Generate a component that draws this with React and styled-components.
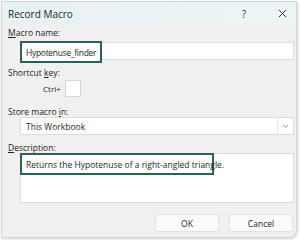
import styled, { createGlobalStyle } from "styled-components";

const Global = createGlobalStyle`
  html, body { margin: 0; padding: 0; background: #ffffff; }
  body { width: 300px; height: 240px; overflow: hidden; font-family: "Open Sans", "Noto Sans", sans-serif; }
`;

const Frame = styled.div`
  box-sizing: border-box;
  margin: 1px 0 0 1px;
  width: 296px;
  height: 237px;
  border: 1px solid #d4d6d8;
  border-radius: 0 0 8px 0;
  background: #f0f0f0;
  box-shadow: 1px 1px 3px rgba(0, 0, 0, 0.18);
  display: flex;
  flex-direction: column;
  overflow: hidden;
`;

const TitleBar = styled.div`
  height: 23px;
  flex: none;
  display: flex;
  align-items: center;
  padding-left: 6px;
  background: linear-gradient(90deg, #e7f2f4 0%, #edf4f6 100%);
  color: #1f1f1f;
  font-size: 10px;
`;

const Title = styled.span`
  flex: 1;
`;

const TitleButton = styled.span`
  width: ${(p) => p.$w}px;
  margin-right: ${(p) => p.$mr || 0}px;
  display: flex;
  align-items: center;
  justify-content: center;
  color: #333;
  font-size: 10px;
`;

const Form = styled.div`
  display: flex;
  flex-direction: column;
  padding: 0 2px 0 6px;
`;

const Label = styled.div`
  margin-top: ${(p) => p.$top}px;
  height: 10px;
  line-height: 10px;
  font-size: 8.5px;
  color: #1f1f1f;

  u {
    text-decoration: underline;
    text-underline-offset: 1px;
  }
`;

const Field = styled.div`
  position: relative;
  margin: ${(p) => p.$top}px 0 0 12px;
  width: 274px;
  height: ${(p) => p.$h}px;
  flex: none;
  box-sizing: border-box;
  background: #ffffff;
  border: 1px solid #dcdcdc;
  display: flex;
  align-items: center;
  font-size: 8.5px;
  color: #1f1f1f;
`;

const FieldText = styled.span`
  padding-left: 5px;
  flex: 1;
  white-space: nowrap;
`;

const Highlight = styled.div`
  position: absolute;
  left: -1px;
  top: ${(p) => p.$top}px;
  width: ${(p) => p.$w}px;
  height: ${(p) => p.$h}px;
  box-sizing: border-box;
  border: 2px solid #2c5e5b;
  background: #ffffff;
  display: flex;
  align-items: center;
  padding-left: 4px;
  font-size: 8.5px;
  letter-spacing: ${(p) => p.$ls || 0}px;
  color: #1f1f1f;
  white-space: nowrap;
`;

const Caret = styled.span`
  display: inline-block;
  width: 1px;
  height: 11px;
  margin-left: 1px;
  background: #1f1f1f;
`;

const ShortcutRow = styled.div`
  margin: 2px 0 0 35px;
  height: 17px;
  display: flex;
  align-items: center;
  gap: 4px;
  font-size: 8px;
  color: #1f1f1f;
`;

const KeyBox = styled.div`
  width: 16px;
  height: 17px;
  box-sizing: border-box;
  background: #ffffff;
  border: 1px solid #d6d6d6;
`;

const DropArrow = styled.div`
  width: 15px;
  height: 100%;
  border-left: 1px solid #e6e6e6;
  display: flex;
  align-items: center;
  justify-content: center;
`;

const Buttons = styled.div`
  margin-top: 11px;
  display: flex;
  justify-content: flex-end;
  gap: 10px;
  padding-right: 1px;
`;

const Button = styled.button`
  width: ${(p) => p.$w}px;
  height: 18px;
  box-sizing: border-box;
  border: 1px solid #e2e2e2;
  border-radius: 2px;
  background: #fbfbfb;
  font-family: "Open Sans", "Noto Sans", sans-serif;
  font-size: 8.5px;
  color: #1f1f1f;
  padding: 0;
`;

export default function App() {
  return (
    <>
      <Global />
      <Frame>
        <TitleBar>
          <Title>Record Macro</Title>
          <TitleButton $w={24} $mr={12}>?</TitleButton>
          <TitleButton $w={28}>
            <svg width="9" height="9" viewBox="0 0 9 9">
              <path d="M1 1 L8 8 M8 1 L1 8" stroke="#333" strokeWidth="1" />
            </svg>
          </TitleButton>
        </TitleBar>
        <Form>
          <Label $top={3}>
            <u>M</u>acro name:
          </Label>
          <Field $top={4} $h={18}>
            <Highlight $top={-2} $w={82} $h={22} $ls={-0.3}>Hypotenuse_finder</Highlight>
          </Field>
          <Label $top={8}>
            Shortcut <u>k</u>ey:
          </Label>
          <ShortcutRow>
            Ctrl+
            <KeyBox />
          </ShortcutRow>
          <Label $top={10}>
            Store macro <u>i</u>n:
          </Label>
          <Field $top={0} $h={18}>
            <FieldText>This Workbook</FieldText>
            <DropArrow>
              <svg width="7" height="5" viewBox="0 0 7 5">
                <path d="M1 1 L3.5 3.5 L6 1" fill="none" stroke="#888" strokeWidth="0.9" />
              </svg>
            </DropArrow>
          </Field>
          <Label $top={8}>
            <u>D</u>escription:
          </Label>
          <Field $top={0} $h={50}>
            <Highlight $top={-1} $w={194} $h={22}>
              Returns the Hypotenuse of a right-angled triangle.
              <Caret />
            </Highlight>
          </Field>
          <Buttons>
            <Button $w={64}>OK</Button>
            <Button $w={64}>Cancel</Button>
          </Buttons>
        </Form>
      </Frame>
    </>
  );
}
